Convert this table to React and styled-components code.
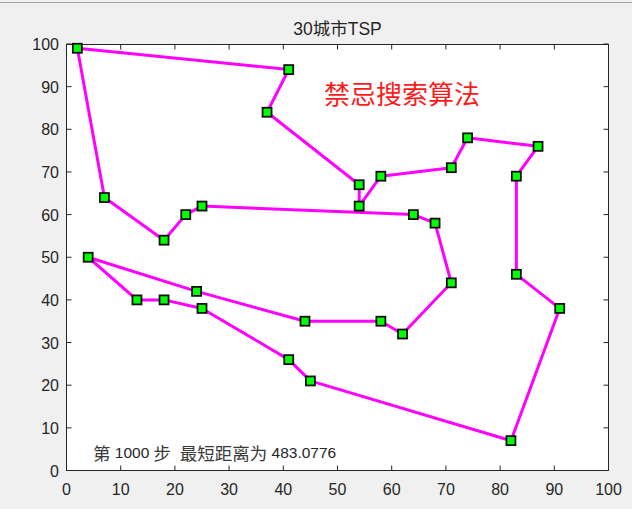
import React from "react";
import styled, { createGlobalStyle } from "styled-components";

const GlobalStyle = createGlobalStyle`
  html, body { margin: 0; padding: 0; background: #f0f0f0; }
  #root { width: 632px; height: 509px; }
`;

const Figure = styled.div`
  width: 632px;
  height: 509px;
  background: #f0f0f0;
  display: flex;
  flex-direction: column;
  overflow: hidden;
  font-family: "Liberation Sans", Arial, "Noto Sans CJK SC", sans-serif;
`;

const TopGap = styled.div`
  height: 2px;
  background: #f3f3f3;
`;

const Rule = styled.div`
  height: 1px;
  background: #a0a0a0;
`;

const Chart = styled.svg`
  display: block;
  width: 632px;
  height: 506px;
  font-family: "Liberation Sans", Arial, "Noto Sans CJK SC", sans-serif;
`;

const route = [
  [2, 99], [41, 94], [37, 84], [54, 67], [54, 62], [58, 69], [71, 71],
  [74, 78], [87, 76], [83, 69], [83, 46], [91, 38], [82, 7], [45, 21],
  [41, 26], [25, 38], [18, 40], [13, 40], [4, 50], [24, 42], [44, 35],
  [58, 35], [62, 32], [71, 44], [68, 58], [64, 60], [25, 62], [22, 60],
  [18, 54], [7, 64],
];

// chart coordinates: svg y = page y - 3
const X = (v) => 66.5 + v * 5.42;
const Y = (v) => 467.5 - v * 4.265;
const ticks = [0, 10, 20, 30, 40, 50, 60, 70, 80, 90, 100];
const CJK = "'Noto Sans CJK SC', sans-serif";

export default function App() {
  const pts = [...route, route[0]].map(([x, y]) => `${X(x)},${Y(y)}`).join(" ");
  return (
    <>
      <GlobalStyle />
      <Figure>
        <TopGap />
        <Rule />
        <Chart viewBox="0 0 632 506">
          <text x="337.5" y="26" textAnchor="middle" dominantBaseline="central" fontSize="17.5" fill="#262626">
            30城市TSP
          </text>
          <rect x="66.5" y="41.5" width="542" height="426" fill="#ffffff" />
          {ticks.map((t) => (
            <g key={t} stroke="#262626" strokeWidth="1">
              <line x1={X(t)} y1="467.5" x2={X(t)} y2="462.5" />
              <line x1={X(t)} y1="41.5" x2={X(t)} y2="46.5" />
              <line x1="66.5" y1={Y(t)} x2="71.5" y2={Y(t)} />
              <line x1="608.5" y1={Y(t)} x2="603.5" y2={Y(t)} />
            </g>
          ))}
          <rect x="66.5" y="41.5" width="542" height="426" fill="none" stroke="#262626" strokeWidth="1" />
          {ticks.map((t) => (
            <text key={"y" + t} x="59" y={Y(t) + 0.5} textAnchor="end" dominantBaseline="central" fontSize="16" fill="#262626">
              {t}
            </text>
          ))}
          {ticks.map((t) => (
            <text key={"x" + t} x={X(t)} y="486.5" textAnchor="middle" dominantBaseline="central" fontSize="16" fill="#262626">
              {t}
            </text>
          ))}
          <polyline points={pts} fill="none" stroke="#ff00ff" strokeWidth="3" strokeLinejoin="round" />
          {route.map(([x, y], i) => (
            <rect key={i} x={X(x) - 4.5} y={Y(y) - 4.5} width="9" height="9" fill="#00ff00" stroke="#111111" strokeWidth="1.8" />
          ))}
          <text x="324" y="89" dominantBaseline="central" fontSize="26" fill="#ff1a1a" fontFamily={CJK}>
            禁忌搜索算法
          </text>
          <text x="93" y="449" dominantBaseline="central" fontSize="15.5" fill="#262626" xmlSpace="preserve">
            <tspan fontFamily={CJK} fontSize="17.5" fill="#3a3a3a">第</tspan>
            <tspan>{" 1000 "}</tspan>
            <tspan fontFamily={CJK} fontSize="17.5" fill="#3a3a3a">步</tspan>
            <tspan>{"\u00a0 "}</tspan>
            <tspan fontFamily={CJK} fontSize="17.5" fill="#3a3a3a">最短距离为</tspan>
            <tspan>{" 483.0776"}</tspan>
          </text>
        </Chart>
      </Figure>
    </>
  );
}
